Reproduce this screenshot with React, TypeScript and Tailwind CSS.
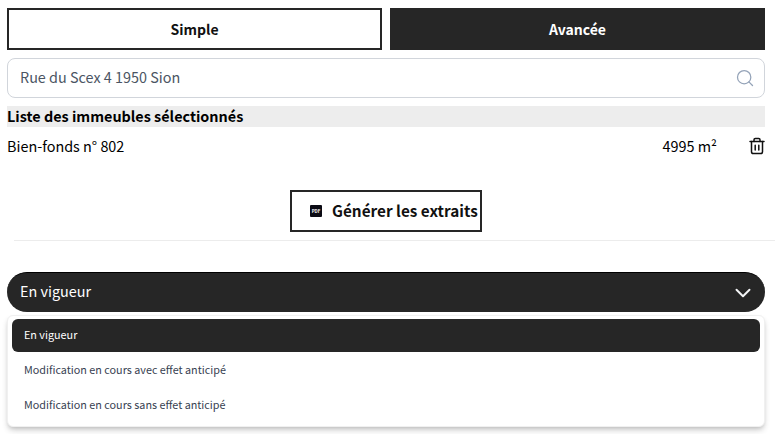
import { ChevronDown, Search } from "lucide-react";

const font = { fontFamily: '"Noto Sans CJK SC", "Noto Sans", sans-serif' };

export default function App() {
  return (
    <div className="w-[775px] h-[434px] overflow-hidden bg-white text-black" style={font}>
      <div className="pl-[7px] pr-[10px] pt-2">
        <div className="flex gap-2">
          <button className="flex-1 h-[42px] border-2 border-[#262626] bg-white text-[14px] font-semibold text-[#111]">Simple</button>
          <button className="flex-1 h-[42px] border-2 border-[#262626] bg-[#262626] text-[14px] font-semibold text-white">Avancée</button>
        </div>
        <div className="mt-2 h-10 flex items-center justify-between rounded-lg border border-[#d1d5db] pl-3 pr-[9px] text-[14.4px] text-[#4b5563]">
          <span className="-mt-[3px]">Rue du Scex 4 1950 Sion</span>
          <Search size={20} strokeWidth={1.5} className="text-[#94a3b8]" />
        </div>
        <div className="mt-2 h-[21px] bg-[#ededed] text-[14.4px] font-bold leading-[20px]">Liste des immeubles sélectionnés</div>
        <div className="mt-2 flex items-center h-[21px] text-[14.4px]">
          <span className="flex-1">Bien-fonds n° 802</span>
          <span className="mr-8">4995 m²</span>
          <svg width="16" height="18" viewBox="0 0 16 18" fill="none" stroke="#111" strokeWidth="1.5" strokeLinecap="round" strokeLinejoin="round" className="shrink-0">
            <path d="M1 4.5h14" />
            <path d="M5 4.5V2.8c0-.8.6-1.3 1.3-1.3h3.4c.7 0 1.3.5 1.3 1.3v1.7" />
            <path d="M2.5 4.5v10.2c0 1 .8 1.8 1.8 1.8h7.4c1 0 1.8-.8 1.8-1.8V4.5" />
            <path d="M6.2 8.2v4.8M9.8 8.2v4.8" />
          </svg>
        </div>
        <div className="mt-[34px] flex justify-center">
          <button className="w-[192px] h-[42px] flex items-center justify-start gap-[10px] pl-[18px] border-2 border-[#262626] text-[15.3px] font-semibold text-[#111] whitespace-nowrap">
            <svg width="12" height="12" viewBox="0 0 12 12" className="shrink-0">
              <rect width="12" height="12" rx="1" fill="#0b0b14" />
              <text x="6" y="7.8" textAnchor="middle" fontSize="4.4" fontWeight="700" fill="#fff">PDF</text>
            </svg>
            <span className="-mt-[2px]">Générer les extraits</span>
          </button>
        </div>
      </div>
      <div className="mt-2 ml-[14px] h-px bg-[#ececec]" />
      <div className="pl-[7px] pr-[10px] pt-[31px]">
        <div className="h-10 flex items-center justify-between rounded-full bg-[#262626] border-t border-black pl-[13px] pr-[9px] text-[14.4px] text-white">
          <span className="-mt-[3px]">En vigueur</span>
          <ChevronDown size={26} strokeWidth={1.8} className="text-[#f3f4f6]" />
        </div>
        <div className="mt-[3px] h-[112px] rounded-md bg-white px-1 pt-[3px] border border-[#f0f0f0] shadow-[0_4px_6px_-1px_rgba(0,0,0,0.2),0_2px_4px_-2px_rgba(0,0,0,0.15)] text-[10.8px] text-[#374151]">
          <div className="h-[33px] flex items-center rounded-md bg-[#262626] px-3 pb-[2px] text-white">En vigueur</div>
          <div className="h-[35px] flex items-center px-3 pb-[3px] mt-px">Modification en cours avec effet anticipé</div>
          <div className="h-[35px] flex items-center px-3 pb-[3px]">Modification en cours sans effet anticipé</div>
        </div>
      </div>
    </div>
  );
}
